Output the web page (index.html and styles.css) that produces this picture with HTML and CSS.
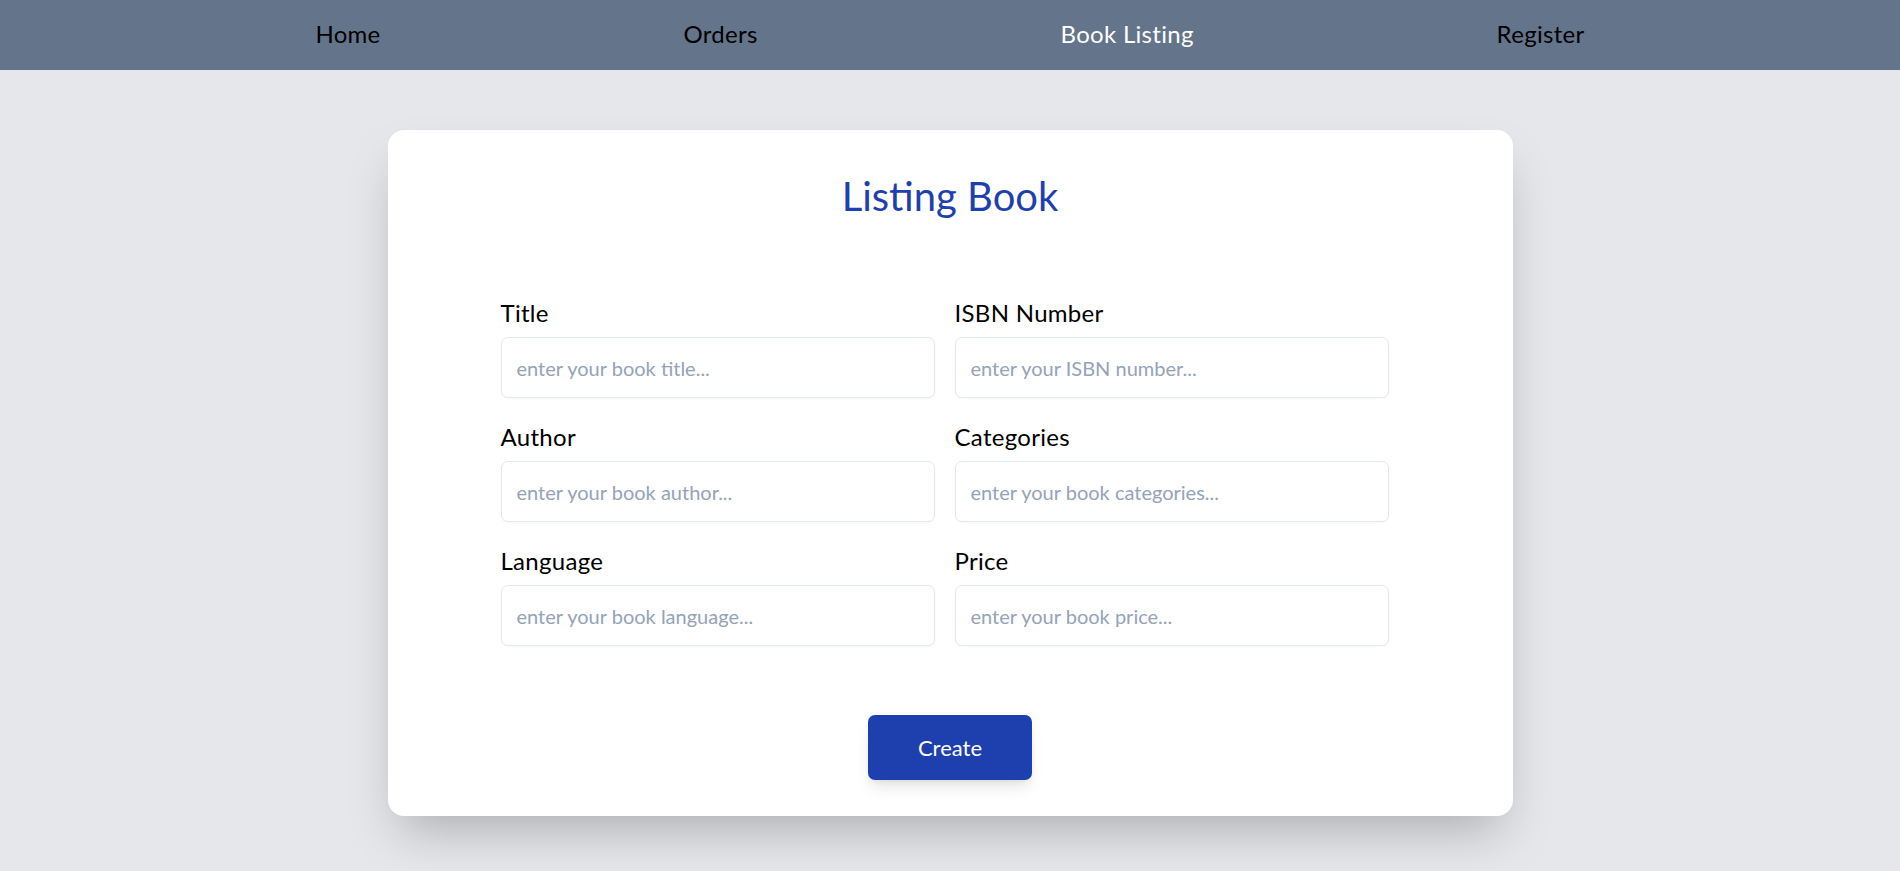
FILE: index.html
```html
<!DOCTYPE html>
<html lang="en">
<head>
<meta charset="utf-8">
<title>Listing Book</title>
<link rel="stylesheet" href="styles.css">
</head>
<body>
<nav class="nav">
  <a class="nav-link" href="#">Home</a>
  <a class="nav-link" href="#">Orders</a>
  <a class="nav-link active" href="#">Book Listing</a>
  <a class="nav-link" href="#">Register</a>
</nav>
<main class="main">
  <section class="card">
    <h1 class="card-title">Listing Book</h1>
    <form class="form">
      <div class="field">
        <label class="label">Title</label>
        <input class="input" type="text" placeholder="enter your book title...">
      </div>
      <div class="field">
        <label class="label">ISBN Number</label>
        <input class="input" type="text" placeholder="enter your ISBN number...">
      </div>
      <div class="field">
        <label class="label">Author</label>
        <input class="input" type="text" placeholder="enter your book author...">
      </div>
      <div class="field">
        <label class="label">Categories</label>
        <input class="input" type="text" placeholder="enter your book categories...">
      </div>
      <div class="field">
        <label class="label">Language</label>
        <input class="input" type="text" placeholder="enter your book language...">
      </div>
      <div class="field">
        <label class="label">Price</label>
        <input class="input" type="text" placeholder="enter your book price...">
      </div>
    </form>
    <div class="actions">
      <button class="btn" type="button">Create</button>
    </div>
  </section>
</main>
</body>
</html>
```
FILE: styles.css
```css
* { box-sizing: border-box; }
html, body { margin: 0; padding: 0; }
body {
  background: #e5e7eb;
  font-family: Lato, "Open Sans", "Liberation Sans", sans-serif;
  color: #000;
  min-height: 871px;
}
.nav {
  height: 70px;
  background: #64748b;
  display: flex;
  align-items: center;
  justify-content: space-around;
  padding: 0 164px 4px 164px;
}
.nav-link {
  font-size: 24px;
  letter-spacing: 0.3px;
  color: #000;
  text-decoration: none;
}
.nav-link.active { color: #fff; }
.main {
  padding-top: 60px;
  padding-bottom: 56px;
}
.card {
  width: 1125px;
  margin: 0 auto;
  background: #fff;
  border-radius: 16px;
  box-shadow: 0 25px 50px -12px rgba(0,0,0,0.25);
  padding: 36px 0 36px 0;
}
.card-title {
  margin: 0 0 69px 0;
  font-size: 40px;
  line-height: 60px;
  font-weight: 400;
  color: #1e40af;
  text-align: center;
}
.form {
  margin: 0 124px 0 113px;
  display: grid;
  grid-template-columns: 1fr 1fr;
  column-gap: 20px;
  row-gap: 21px;
}
.field {
  display: flex;
  flex-direction: column;
  gap: 6px;
}
.label {
  font-size: 24px;
  line-height: 36px;
  letter-spacing: 0.3px;
}
.input {
  height: 61px;
  width: 100%;
  border: 1px solid #e2e8f0;
  border-radius: 7px;
  padding: 0 15px;
  font-family: inherit;
  font-size: 20px;
  color: #1e293b;
  background: #fff;
  box-shadow: 0 1px 2px rgba(0,0,0,0.03);
  outline: none;
}
.input::placeholder { color: #94a3b8; }
.actions {
  display: flex;
  justify-content: center;
  margin-top: 69px;
}
.btn {
  width: 164px;
  height: 65px;
  border: none;
  border-radius: 7px;
  background: #1e40af;
  color: #fff;
  font-family: inherit;
  font-size: 22px;
  box-shadow: 0 10px 15px -3px rgba(0,0,0,0.1), 0 4px 6px -4px rgba(0,0,0,0.1);
  cursor: pointer;
}
```
